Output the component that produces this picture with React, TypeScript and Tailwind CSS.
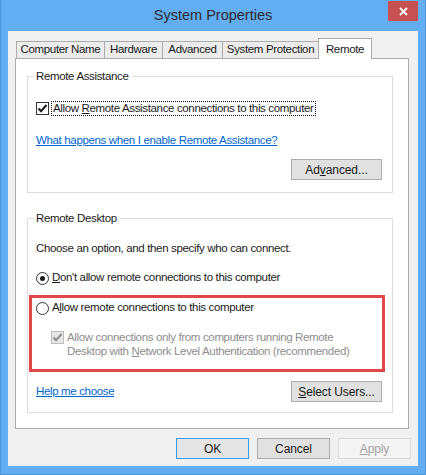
import React from "react";

function CheckBox({ disabled = false }: { disabled?: boolean }) {
  return (
    <span
      className={
        "flex h-[13px] w-[13px] shrink-0 items-center justify-center border " +
        (disabled ? "border-[#bcbcbc] bg-[#e6e6e6]" : "border-[#333333] bg-white")
      }
    >
      <svg width="11" height="11" viewBox="0 0 11 11">
        <path
          d="M1.5 5.5 L4 8.2 L9.5 2"
          fill="none"
          stroke={disabled ? "#8c8c8c" : "#1a1a1a"}
          strokeWidth="2"
        />
      </svg>
    </span>
  );
}

function Radio({ checked = false }: { checked?: boolean }) {
  return (
    <span className="flex h-[13px] w-[13px] shrink-0 items-center justify-center rounded-full border border-[#333333] bg-white">
      {checked && <span className="h-[5px] w-[5px] rounded-full bg-[#1a1a1a]" />}
    </span>
  );
}

function Btn({
  children,
  w,
  variant = "normal",
}: {
  children: React.ReactNode;
  w: string;
  variant?: "normal" | "default" | "disabled";
}) {
  const cls =
    variant === "default"
      ? "border-[#3c9ae8] bg-[#e5e5e5] text-[#1a1a1a]"
      : variant === "disabled"
      ? "border-[#d9d9d9] bg-[#f4f4f4] text-[#a3a3a3]"
      : "border-[#adadad] bg-[#e1e1e1] text-[#1a1a1a]";
  return (
    <div className={`flex h-[21px] ${w} shrink-0 items-center justify-center border text-[12px] tracking-[-0.1px] ${cls}`}>
      {children}
    </div>
  );
}

export default function App() {
  return (
    <div className="flex h-[475px] w-[426px] flex-col border-x border-b border-[#4d94d8] bg-[#63adf3] font-['Liberation_Sans',sans-serif] text-[11.5px] tracking-[-0.35px] text-[#1a1a1a]">
      {/* title bar */}
      <div className="relative flex h-[31px] shrink-0 items-center justify-center">
        <span className="text-[14.5px] tracking-normal text-[#2b2b2b]">System Properties</span>
        <div className="absolute right-[7px] top-[1px] flex h-[20px] w-[30px] items-center justify-center bg-[#c75050]">
          <svg width="9" height="9" viewBox="0 0 9 9">
            <path d="M1 1 L8 8 M8 1 L1 8" stroke="white" strokeWidth="1.8" />
          </svg>
        </div>
      </div>

      {/* body */}
      <div className="mx-[7px] mb-[8px] flex flex-1 flex-col bg-[#f0f0f0] pl-[7px] pr-[7px] pt-[7px]">
        {/* tabs */}
        <div className="relative z-10 -mb-px flex h-[21px] items-end whitespace-nowrap pl-px">
          <div className="flex h-[18px] w-[89px] items-center justify-center border border-[#acacac] bg-[#ececec]">Computer Name</div>
          <div className="-ml-px flex h-[18px] w-[59px] items-center justify-center border border-[#acacac] bg-[#ececec]">Hardware</div>
          <div className="-ml-px flex h-[18px] w-[61px] items-center justify-center border border-[#acacac] bg-[#ececec]">Advanced</div>
          <div className="-ml-px flex h-[18px] w-[97px] items-center justify-center border border-[#acacac] bg-[#ececec]">System Protection</div>
          <div className="-ml-px flex h-[21px] w-[54px] items-start justify-center border-x border-t border-[#acacac] bg-white pt-[2px]">Remote</div>
        </div>

        {/* panel */}
        <div className="flex h-[371px] w-[394px] flex-col border border-[#acacac] bg-white whitespace-nowrap">
          {/* Remote Assistance */}
          <fieldset className="ml-[11px] mt-[10px] flex w-[366px] flex-col border border-[#dcdcdc]">
            <legend className="ml-[5px] px-[3px] leading-[15px]">Remote Assistance</legend>
            <div className="mt-[16px] flex h-[16px] items-center pl-[8px]">
              <CheckBox />
              <span className="ml-[2px] border border-dotted border-[#1a1a1a] px-px leading-[13px]">
                Allow <u>R</u>emote Assistance connections to this computer
              </span>
            </div>
            <div className="mt-[17px] flex h-[16px] items-center pl-[8px]">
              <span className="text-[#0066cc] underline">What happens when I enable Remote Assistance?</span>
            </div>
            <div className="mb-[12px] mr-[10px] mt-[10px] self-end">
              <Btn w="w-[91px]">
                Ad<u>v</u>anced...
              </Btn>
            </div>
          </fieldset>

          {/* Remote Desktop */}
          <fieldset className="ml-[11px] mt-[18px] flex w-[366px] flex-col border border-[#dcdcdc]">
            <legend className="ml-[5px] px-[3px] leading-[15px]">Remote Desktop</legend>
            <div className="mt-[15px] flex h-[16px] items-center pl-[8px]">
              Choose an option, and then specify who can connect.
            </div>
            <div className="mt-[13px] flex h-[16px] items-center gap-[3px] pl-[8px]">
              <Radio checked />
              <span>
                <u>D</u>on't allow remote connections to this computer
              </span>
            </div>
            <div className="ml-px mr-[7px] mt-[9px] flex flex-col border-[3px] border-[#e2474a] pb-[11px] pl-[4px] pt-[2px]">
              <div className="flex h-[16px] items-center gap-[3px]">
                <Radio />
                <span>
                  A<u>l</u>low remote connections to this computer
                </span>
              </div>
              <div className="mt-[14px] flex items-start gap-[3px] pl-[15px]">
                <div className="pt-[1px]">
                  <CheckBox disabled />
                </div>
                <span className="leading-[14px] text-[#8d8d8d]">
                  Allow connections only from computers running Remote
                  <br />
                  Desktop with <u>N</u>etwork Level Authentication (recommended)
                </span>
              </div>
            </div>
            <div className="mb-[10px] mr-[10px] mt-[9px] flex items-center justify-between pl-[8px]">
              <span className="text-[#0066cc] underline">Help me choose</span>
              <Btn w="w-[91px]">
                <u>S</u>elect Users...
              </Btn>
            </div>
          </fieldset>
        </div>

        {/* bottom buttons */}
        <div className="mt-[9px] flex justify-end gap-[8px]">
          <Btn w="w-[73px]" variant="default">
            OK
          </Btn>
          <Btn w="w-[73px]">Cancel</Btn>
          <Btn w="w-[73px]" variant="disabled">
            <u>A</u>pply
          </Btn>
        </div>
      </div>
    </div>
  );
}
